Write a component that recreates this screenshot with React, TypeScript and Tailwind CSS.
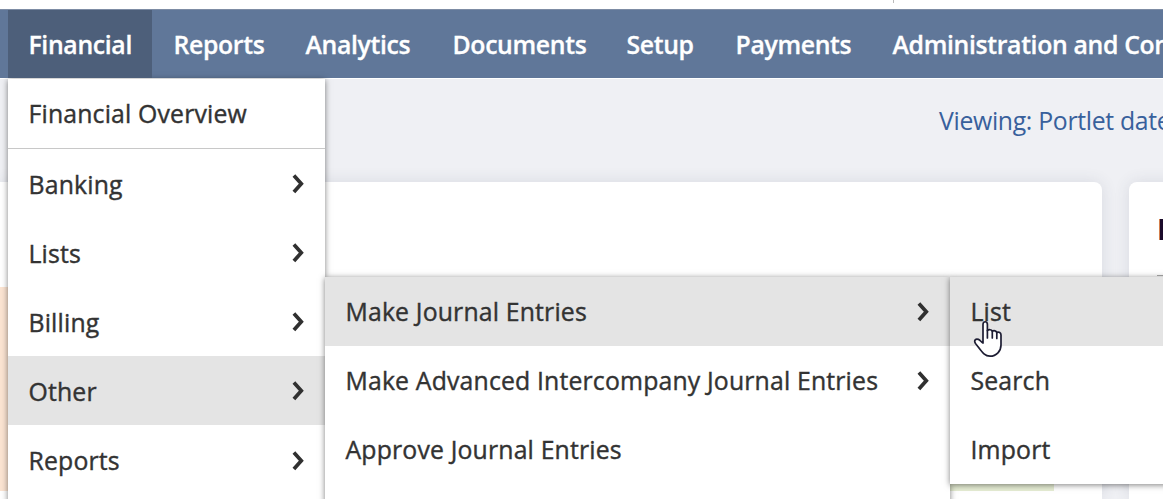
import React from "react";

const navItems = [
  { label: "Financial", width: "w-[145px]", active: true },
  { label: "Reports", width: "w-[132px]" },
  { label: "Analytics", width: "w-[147px]" },
  { label: "Documents", width: "w-[174px]" },
  { label: "Setup", width: "w-[109px]" },
  { label: "Payments", width: "w-[157px]" },
  { label: "Administration and Configuration", width: "w-[420px]" },
];

function Chevron() {
  return (
    <svg className="h-[22px] w-[14px] shrink-0" viewBox="0 0 14 22" fill="none" stroke="#303030" strokeWidth="3.7">
      <path d="M1.9 2.4 L9.3 10.7 L1.9 19" />
    </svg>
  );
}

type RowProps = { label: string; arrow?: boolean; active?: boolean };

function Row({ label, arrow, active }: RowProps) {
  return (
    <div
      className={
        "flex h-[69.1px] shrink-0 items-center justify-between pt-px pl-[20.5px] pr-[19px] whitespace-nowrap " +
        (active ? "bg-[#e4e4e4]" : "")
      }
    >
      <span>{label}</span>
      {arrow && <Chevron />}
    </div>
  );
}

const menuBase =
  "absolute flex flex-col bg-white text-[24.8px] tracking-[0.17px] text-[#333333] [-webkit-text-stroke:0.4px_#333333] shadow-[0_1px_6px_rgba(0,0,0,0.5)] ";

export default function App() {
  return (
    <div className="h-[500px] w-[1165px] bg-white pr-[2px] pb-px font-['Open_Sans',sans-serif]">
      <div className="relative flex h-full flex-col overflow-hidden bg-[#eff0f4]">
        <div className="flex h-[9px] shrink-0 bg-white pl-[893px]">
          <div className="h-[3px] w-px bg-[#bbbbbb]" />
        </div>
        <nav className="flex h-[69px] shrink-0 border-t border-[#7d8ca4] bg-[#607799] pl-2 text-[24.8px] font-semibold tracking-[-0.34px] text-white [-webkit-text-stroke:0.3px_white]">
          {navItems.map((item) => (
            <div
              key={item.label}
              className={
                "flex shrink-0 items-center pt-[2px] pl-[20.5px] whitespace-nowrap " +
                item.width +
                (item.active ? " bg-linear-to-r from-[#4d5f7a] from-[144px] to-[#607799] to-[144px]" : "")
              }
            >
              {item.label}
            </div>
          ))}
        </nav>
        <div className="flex h-[104px] shrink-0 border-t border-white pt-[24px] pl-[939px] text-[24.8px] leading-[34px] tracking-[-0.32px] whitespace-nowrap text-[#38609c]">
          Viewing: Portlet date settings
        </div>
        <main className="flex flex-1">
          <section className="flex w-[1102px] shrink-0 flex-col rounded-tr-[8px] bg-white pt-[105px] shadow-[0_0_16px_rgba(60,65,90,0.12)]">
            <div className="flex h-[204px] justify-between pr-[48px]">
              <div className="w-[60px] bg-[#fbe4d2]" />
              <div className="w-[200px] bg-[#e6edd4]" />
            </div>
          </section>
          <section className="ml-[27px] flex w-[200px] shrink-0 flex-col rounded-tl-[8px] bg-white pt-[28px] pl-[28px] shadow-[0_0_16px_rgba(60,65,90,0.12)]">
            <div className="h-[65px] text-[28px] leading-[38px] font-bold text-[#1b0b2b]">KPI</div>
            <div className="h-px bg-[#aaaaaa]" />
          </section>
        </main>

        <div className={menuBase + "top-[79px] left-[8px] h-[440px] w-[317px]"}>
          <Row label="Financial Overview" />
          <div className="h-px shrink-0 bg-[#c8c8c8]" />
          <Row label="Banking" arrow />
          <Row label="Lists" arrow />
          <Row label="Billing" arrow />
          <Row label="Other" arrow active />
          <Row label="Reports" arrow />
        </div>
        <div className="absolute top-[70px] left-0 h-[8px] w-[8px] bg-[#607799]" />
        <div className="absolute top-[70px] left-[8px] h-[8px] w-[144px] bg-[#4d5f7a]" />

        <div className={menuBase + "top-[276.5px] left-[325px] h-[240px] w-[625px]"}>
          <Row label="Make Journal Entries" arrow active />
          <Row label="Make Advanced Intercompany Journal Entries" arrow />
          <Row label="Approve Journal Entries" />
        </div>

        <div className={menuBase + "top-[276.5px] left-[950px] h-[207.5px] w-[240px]"}>
          <Row label="List" active />
          <Row label="Search" />
          <Row label="Import" />
        </div>

        <svg
          className="absolute top-[320px] left-[973px] h-[38px] w-[30px]"
          viewBox="0 0 30 38"
          fill="white"
          stroke="#1d1d33"
          strokeWidth="1.7"
          strokeLinejoin="round"
          strokeLinecap="round"
        >
          <path d="M10 23 V4.5 C10 .8 14.4 .8 14.4 4.5 V10.5 C16 9.2 18.5 9.6 19.3 11.2 C21 10.2 23.2 10.8 23.8 12.4 C26 11.6 28 12.5 28 15 V25 C28 31 23.5 36.2 17 36.2 C11 36.2 8.5 31 2.5 23.5 C.5 20.5 2.8 18.3 5.4 19.4 C7.2 20.2 8.2 22 10 23 Z" />
          <path d="M14.4 10.5 V18 M19.3 11.2 V18 M23.8 12.4 V18.5" fill="none" />
        </svg>
      </div>
    </div>
  );
}
